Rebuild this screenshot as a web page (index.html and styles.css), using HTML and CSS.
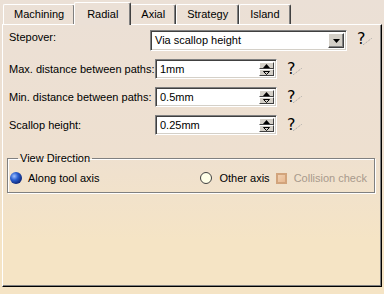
FILE: index.html
```html
<!DOCTYPE html>
<html lang="en">
<head>
<meta charset="UTF-8" />
<title>Radial</title>
<link rel="stylesheet" href="styles.css">
</head>
<body>

<div class="tabs">
  <div class="tab first">Machining</div>
  <div class="tab active">Radial</div>
  <div class="tab">Axial</div>
  <div class="tab">Strategy</div>
  <div class="tab">Island</div>
</div>

<div class="panel">
  <div class="row step-row">
    <span class="label step-label">Stepover:</span>
    <div class="combo">
      <span class="combo-text">Via scallop height</span>
      <span class="combo-btn">
        <svg width="7" height="4" viewBox="0 0 7 4"><path d="M0 0h7L3.5 4z" fill="#000"/></svg>
      </span>
    </div>
    <span class="help">?<svg width="9" height="7" viewBox="0 0 9 7"><path d="M0 7L9 0" stroke="#a0a0a0" stroke-dasharray="1 1"/></svg></span>
  </div>

  <div class="row">
    <span class="label">Max. distance between paths:</span>
    <div class="spin"><span class="spin-text">1mm</span><span class="spin-btns"><span class="up"><svg width="7" height="4" viewBox="0 0 7 4"><path d="M3.5 0L7 4H0z" fill="#000"/></svg></span><span class="down"><svg width="7" height="4" viewBox="0 0 7 4"><path d="M0.5 0.5h6L3.5 3.5z" fill="none" stroke="#000"/></svg></span></span></div>
    <span class="help">?<svg width="9" height="7" viewBox="0 0 9 7"><path d="M0 7L9 0" stroke="#a0a0a0" stroke-dasharray="1 1"/></svg></span>
  </div>

  <div class="row">
    <span class="label">Min. distance between paths:</span>
    <div class="spin"><span class="spin-text">0.5mm</span><span class="spin-btns"><span class="up"><svg width="7" height="4" viewBox="0 0 7 4"><path d="M3.5 0L7 4H0z" fill="#000"/></svg></span><span class="down"><svg width="7" height="4" viewBox="0 0 7 4"><path d="M0.5 0.5h6L3.5 3.5z" fill="none" stroke="#000"/></svg></span></span></div>
    <span class="help">?<svg width="9" height="7" viewBox="0 0 9 7"><path d="M0 7L9 0" stroke="#a0a0a0" stroke-dasharray="1 1"/></svg></span>
  </div>

  <div class="row">
    <span class="label">Scallop height:</span>
    <div class="spin"><span class="spin-text">0.25mm</span><span class="spin-btns"><span class="up"><svg width="7" height="4" viewBox="0 0 7 4"><path d="M3.5 0L7 4H0z" fill="#000"/></svg></span><span class="down"><svg width="7" height="4" viewBox="0 0 7 4"><path d="M0.5 0.5h6L3.5 3.5z" fill="none" stroke="#000"/></svg></span></span></div>
    <span class="help">?<svg width="9" height="7" viewBox="0 0 9 7"><path d="M0 7L9 0" stroke="#a0a0a0" stroke-dasharray="1 1"/></svg></span>
  </div>

  <fieldset class="group">
    <legend>View Direction</legend>
    <div class="opt along"><span class="radio on"></span>Along tool axis</div>
    <div class="opt"><span class="radio"></span>Other axis</div>
    <div class="opt disabled"><span class="check"></span>Collision check</div>
  </fieldset>
</div>

</body>
</html>
```

FILE: styles.css
```css
body {
  margin: 0;
  width: 384px;
  height: 294px;
  font-family: "Liberation Sans", Arial, sans-serif;
  font-size: 11px;
  color: #000;
  background: linear-gradient(#ebe0d6 0px, #eee0d0 150px, #f5e4c5 240px, #f5e4c5 294px);
  overflow: hidden;
}
.tabs {
  display: flex;
  align-items: flex-end;
  height: 24px;
  padding-left: 2px;
}
.tab {
  height: 19px;
  line-height: 19px;
  padding: 0 10px;
  border-top: 1px solid #fff;
  border-left: 1px solid #fff;
  border-right: 1px solid #404040;
  box-shadow: inset -1px 0 0 #808080;
  border-radius: 2px 2px 0 0;
}
.tab.first {
  margin-left: 1px;
}
.tab.active {
  height: 22px;
  line-height: 22px;
  padding: 0 12px;
  margin-bottom: -1px;
  margin-left: -1px;
  margin-right: -1px;
  position: relative;
  z-index: 1;
  background: #ebe0d6;
}
.panel {
  height: 263px;
  margin: 0 2px;
  border-top: 1px solid #fff;
  border-left: 1px solid #fff;
  border-right: 1px solid #000;
  border-bottom: 1px solid #000;
  box-shadow: inset -1px -1px 0 #808080;
  padding: 5px 0 0 6px;
  box-sizing: border-box;
}
.row {
  display: flex;
  align-items: center;
  height: 28px;
}
.step-row {
  height: 21px;
  align-items: flex-start;
  margin-bottom: 4px;
}
.label {
  width: 146px;
  white-space: nowrap;
}
.step-label {
  width: 141px;
  line-height: 14px;
}
.combo {
  display: flex;
  width: 197px;
  height: 21px;
  box-sizing: border-box;
  background: #fff;
  border-top: 1px solid #808080;
  border-left: 1px solid #808080;
  border-right: 1px solid #fff;
  border-bottom: 1px solid #fff;
  box-shadow: inset 1px 1px 0 #404040, inset -1px -1px 0 #d4d0c8;
  padding: 2px;
}
.combo-text {
  flex: 1;
  line-height: 15px;
  padding-left: 2px;
}
.combo-btn {
  width: 16px;
  height: 15px;
  display: flex;
  align-items: center;
  justify-content: center;
  background: #d4d0c8;
  box-sizing: border-box;
  border-top: 1px solid #fff;
  border-left: 1px solid #fff;
  border-right: 1px solid #404040;
  border-bottom: 1px solid #404040;
  box-shadow: inset -1px -1px 0 #808080;
}
.spin {
  display: flex;
  width: 122px;
  height: 20px;
  box-sizing: border-box;
  background: #fff;
  border-top: 1px solid #808080;
  border-left: 1px solid #808080;
  border-right: 1px solid #fff;
  border-bottom: 1px solid #fff;
  box-shadow: inset 1px 1px 0 #404040, inset -1px -1px 0 #d4d0c8;
  padding: 2px;
}
.spin-text {
  flex: 1;
  line-height: 14px;
  padding-left: 2px;
}
.spin-btns {
  display: flex;
  flex-direction: column;
  width: 15px;
}
.spin-btns span {
  height: 7px;
  display: flex;
  align-items: center;
  justify-content: center;
  background: #d4d0c8;
  box-sizing: border-box;
  border-top: 1px solid #fff;
  border-left: 1px solid #fff;
  border-right: 1px solid #404040;
  border-bottom: 1px solid #404040;
}
.help {
  display: flex;
  align-items: flex-end;
  margin-left: 10px;
  font-size: 16px;
  font-family: "DejaVu Sans", sans-serif;
  color: #000;
  line-height: 16px;
}
.step-row .help {
  margin-left: 10px;
  margin-top: 1px;
}
.help svg {
  margin-left: -3px;
  margin-bottom: 2px;
}
.group {
  margin: 13px 0 0 -2px;
  width: 368px;
  height: 41px;
  box-sizing: border-box;
  border: 1px solid #808080;
  box-shadow: 1px 1px 0 #fff, inset 1px 1px 0 #fff;
  padding: 0 7px 0 2px;
  display: flex;
  align-items: center;
}
.group legend {
  padding: 0 2px;
  margin-left: 8px;
}
.opt {
  display: flex;
  align-items: center;
}
.along {
  flex: 1;
}
.opt.disabled {
  color: #a89a8c;
  margin-left: 6px;
}
.radio {
  width: 10px;
  height: 10px;
  border-radius: 50%;
  border: 1px solid #404040;
  background: #ffffe8;
  margin-right: 7px;
}
.radio.on {
  width: 12px;
  height: 12px;
  border: none;
  background: radial-gradient(circle at 35% 35%, #9fc0ff 0, #2a5fd0 35%, #0a1e6a 80%, #000c40 100%);
  margin-right: 6px;
}
.check {
  width: 11px;
  height: 11px;
  box-sizing: border-box;
  border: 2px solid #d2a47c;
  background: linear-gradient(135deg, #f0d0b0, #e8b890);
  margin-right: 7px;
}
```
